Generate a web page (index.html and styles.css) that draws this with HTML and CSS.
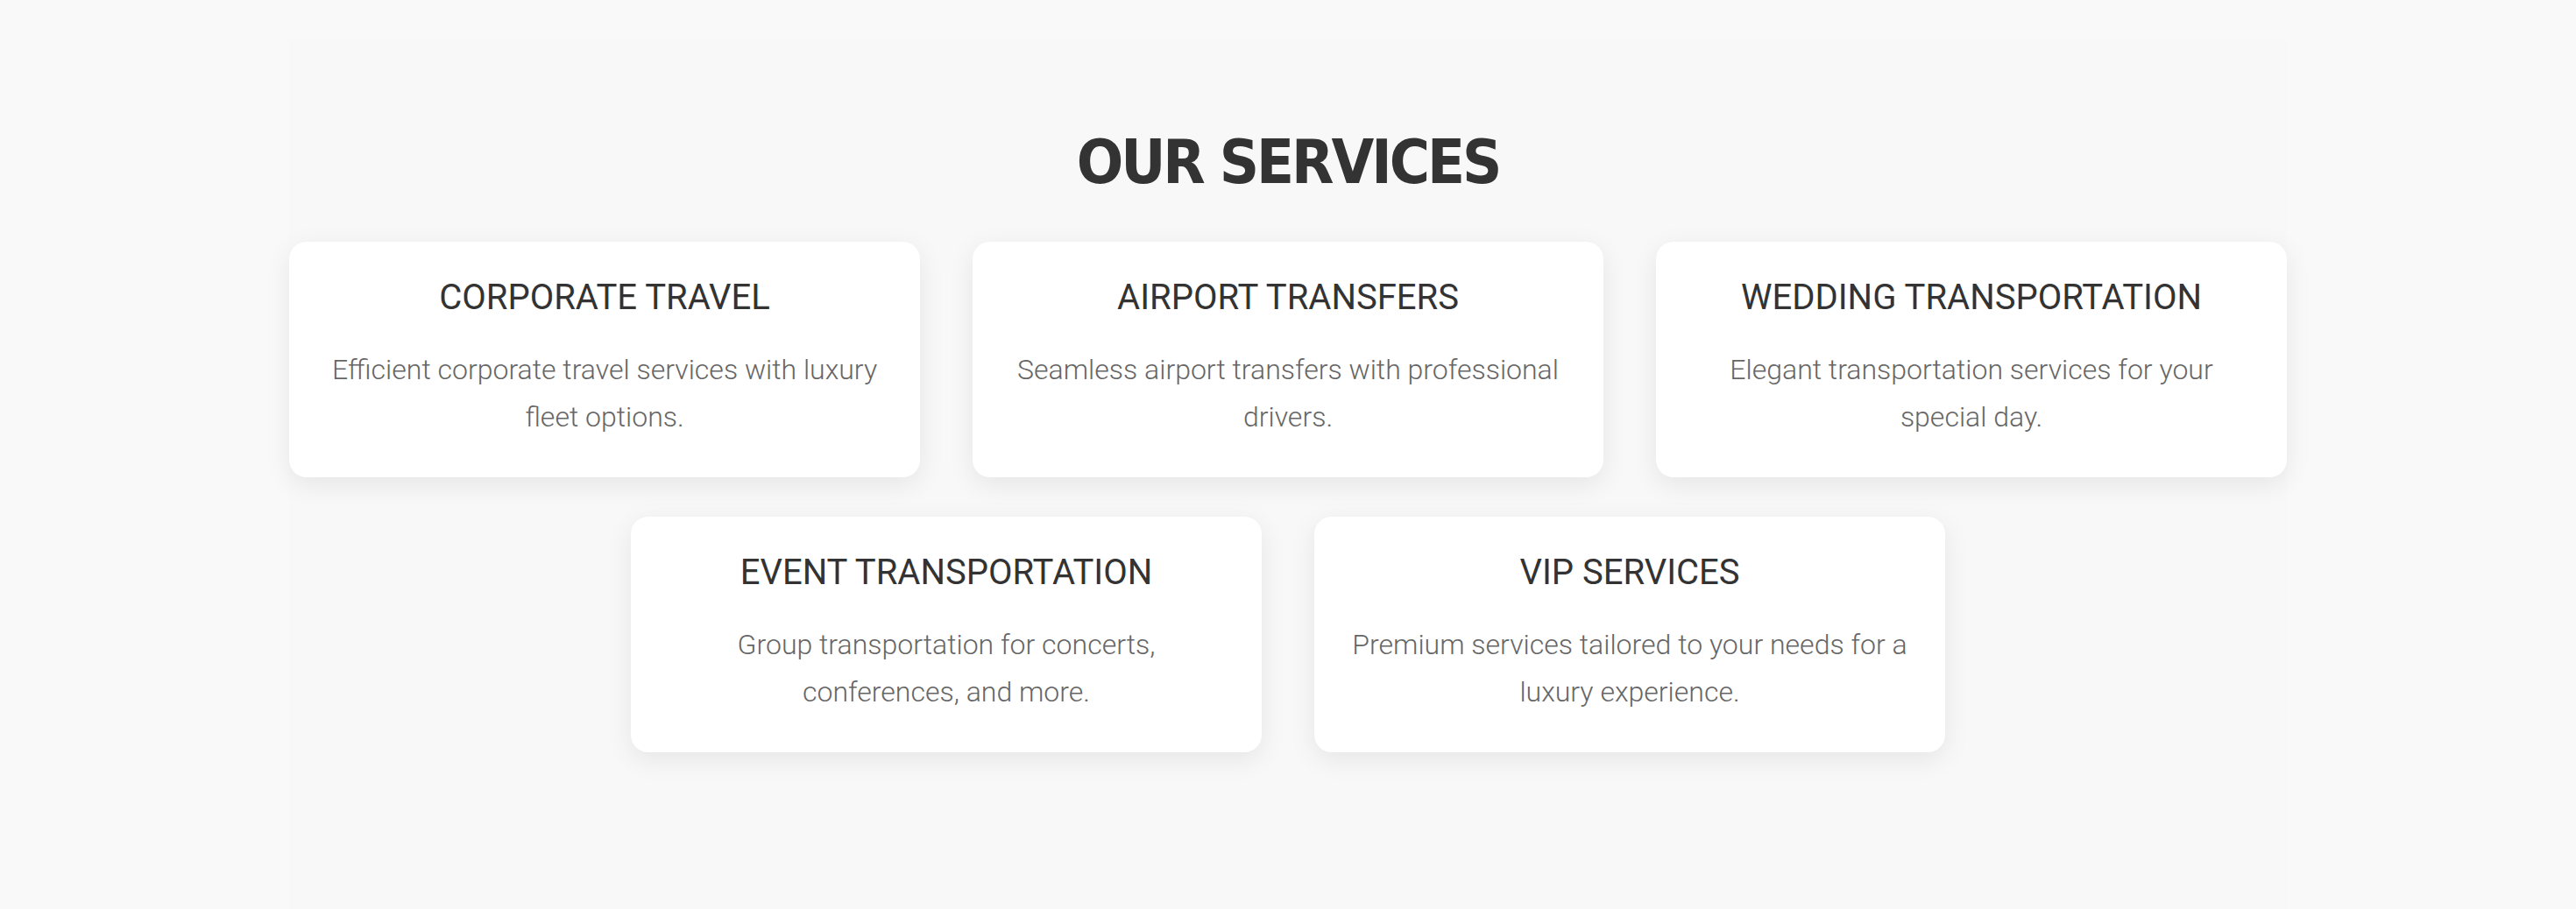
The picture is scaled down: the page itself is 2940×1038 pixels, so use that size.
FILE: index.html
```html
<!DOCTYPE html>
<html lang="en">
<head>
<meta charset="utf-8">
<title>Our Services</title>
<link rel="stylesheet" href="styles.css">
</head>
<body>
<section class="services">
  <h2 class="services-title">OUR SERVICES</h2>
  <div class="services-grid">
    <div class="card">
      <h3 class="card-title">CORPORATE TRAVEL</h3>
      <p class="card-text">Efficient corporate travel services with luxury fleet options.</p>
    </div>
    <div class="card">
      <h3 class="card-title">AIRPORT TRANSFERS</h3>
      <p class="card-text">Seamless airport transfers with professional drivers.</p>
    </div>
    <div class="card">
      <h3 class="card-title">WEDDING TRANSPORTATION</h3>
      <p class="card-text">Elegant transportation services for your special day.</p>
    </div>
    <div class="card">
      <h3 class="card-title">EVENT TRANSPORTATION</h3>
      <p class="card-text">Group transportation for concerts, conferences, and more.</p>
    </div>
    <div class="card">
      <h3 class="card-title">VIP SERVICES</h3>
      <p class="card-text">Premium services tailored to your needs for a luxury experience.</p>
    </div>
  </div>
</section>
</body>
</html>
```

FILE: styles.css
```css
html, body {
  margin: 0;
  padding: 0;
}
body {
  background: #f9f9f9;
  font-family: Roboto, "Liberation Sans", sans-serif;
  min-height: 1038px;
}
.services {
  width: 2280px;
  margin: 45px auto 0;
  background: #f8f8f8;
  padding: 98px 0 120px;
  box-sizing: border-box;
  min-height: 993px;
}
.services-title {
  margin: 0 0 49px;
  text-align: center;
  font-family: "DejaVu Sans Condensed", Roboto, sans-serif;
  font-weight: 700;
  font-size: 70px;
  line-height: 1.2;
  color: #333;
  letter-spacing: -3px;
}
.services-grid {
  display: flex;
  flex-wrap: wrap;
  justify-content: center;
  column-gap: 60px;
  row-gap: 45px;
}
.card {
  width: 720px;
  box-sizing: border-box;
  background: #fff;
  border-radius: 20px;
  box-shadow: 0 8px 30px rgba(0, 0, 0, 0.08);
  padding: 40px 40px 41px;
  text-align: center;
}
.card-title {
  margin: 0 0 31px;
  font-family: Roboto, sans-serif;
  font-weight: 400;
  font-size: 40px;
  line-height: 1.2;
  color: #333;
}
.card-text {
  margin: 0;
  font-family: Roboto, sans-serif;
  font-weight: 300;
  font-size: 32px;
  line-height: 1.7;
  color: #666;
}
```
